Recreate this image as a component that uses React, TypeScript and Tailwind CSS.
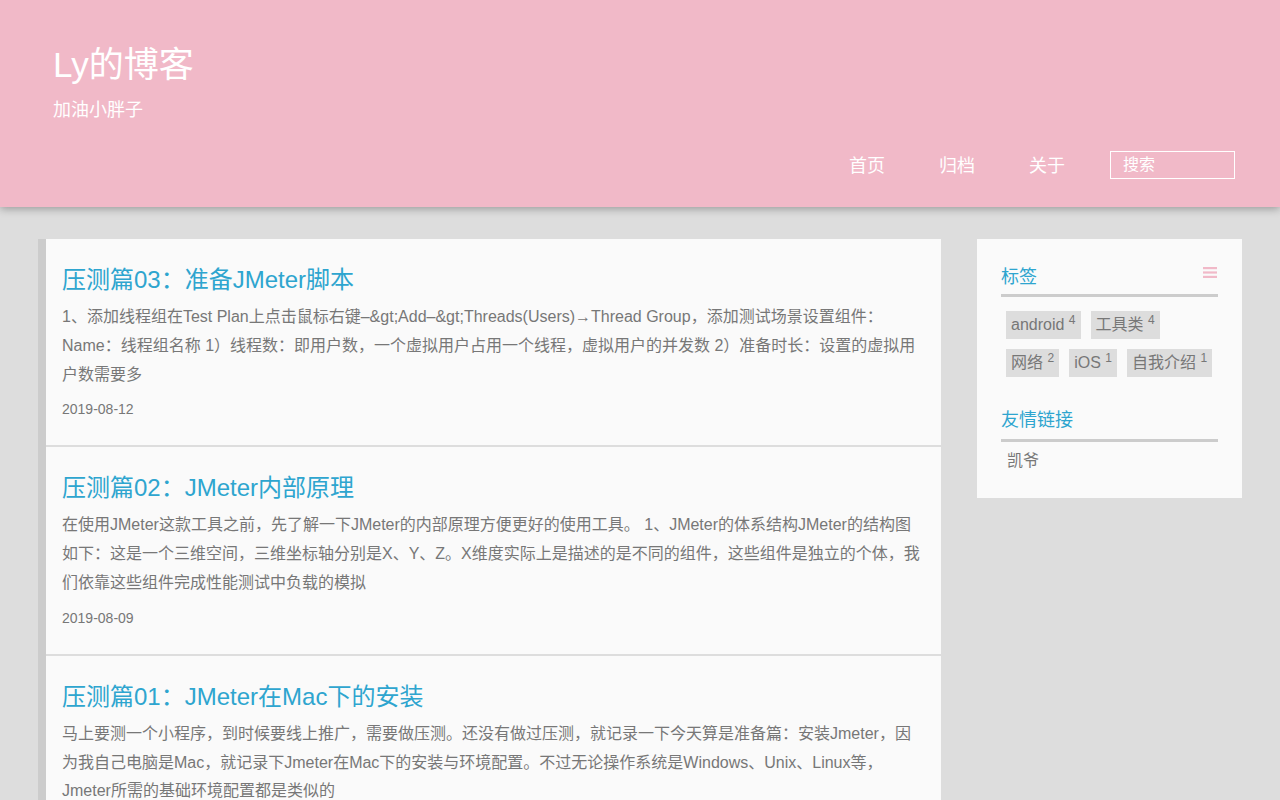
import React from "react";

const FONT = '"Liberation Sans", "Noto Sans CJK SC", sans-serif';

const posts = [
  {
    title: "压测篇03：准备JMeter脚本",
    excerpt:
      "1、添加线程组在Test Plan上点击鼠标右键–&gt;Add–&gt;Threads(Users)→Thread Group，添加测试场景设置组件：Name：线程组名称 1）线程数：即用户数，一个虚拟用户占用一个线程，虚拟用户的并发数 2）准备时长：设置的虚拟用户数需要多",
    date: "2019-08-12",
  },
  {
    title: "压测篇02：JMeter内部原理",
    excerpt:
      "在使用JMeter这款工具之前，先了解一下JMeter的内部原理方便更好的使用工具。 1、JMeter的体系结构JMeter的结构图如下：这是一个三维空间，三维坐标轴分别是X、Y、Z。X维度实际上是描述的是不同的组件，这些组件是独立的个体，我们依靠这些组件完成性能测试中负载的模拟",
    date: "2019-08-09",
  },
  {
    title: "压测篇01：JMeter在Mac下的安装",
    excerpt:
      "马上要测一个小程序，到时候要线上推广，需要做压测。还没有做过压测，就记录一下今天算是准备篇：安装Jmeter，因为我自己电脑是Mac，就记录下Jmeter在Mac下的安装与环境配置。不过无论操作系统是Windows、Unix、Linux等，Jmeter所需的基础环境配置都是类似的",
    date: "2019-08-08",
  },
];

const tags = [
  { name: "android", count: 4 },
  { name: "工具类", count: 4 },
  { name: "网络", count: 2 },
  { name: "iOS", count: 1 },
  { name: "自我介绍", count: 1 },
];

function MenuIcon() {
  return (
    <svg width="14" height="11" viewBox="0 0 14 11" className="block">
      <rect x="0" y="0" width="14" height="2.2" fill="#f1b9c8" />
      <rect x="0" y="4.4" width="14" height="2.2" fill="#f1b9c8" />
      <rect x="0" y="8.8" width="14" height="2.2" fill="#f1b9c8" />
    </svg>
  );
}

export default function App() {
  return (
    <div className="min-h-screen bg-[#dddddd]" style={{ fontFamily: FONT }}>
      <header className="relative z-10 h-[207px] bg-[#f1b9c8] pl-[53px] pr-[45px] pt-[44px] text-white shadow-[0_2px_8px_rgba(0,0,0,0.3)]">
        <div className="text-[35px] leading-[42px]">Ly的博客</div>
        <div className="mt-[11px] text-[18px] leading-[27px]">加油小胖子</div>
        <nav className="mt-[27px] flex h-[28px] items-center justify-end">
          <a className="px-[27px] pt-[2px] text-[18px] leading-[28px]">首页</a>
          <a className="px-[27px] pt-[2px] text-[18px] leading-[28px]">归档</a>
          <a className="px-[27px] pt-[2px] text-[18px] leading-[28px]">关于</a>
          <input
            placeholder="搜索"
            className="ml-[18px] h-[28px] w-[125px] border border-white bg-transparent pl-[12px] text-[16px] text-white outline-none placeholder:text-white"
            style={{ fontFamily: FONT }}
          />
        </nav>
      </header>

      <div className="flex items-start gap-[36px] px-[38px] pt-[32px]">
        <main className="min-w-0 flex-1 border-l-8 border-[#cccccc]">
          {posts.map((p) => (
            <article
              key={p.title}
              className="border-b-2 border-[#dddddd] bg-[#fafafa] pb-[26px] pl-4 pr-4 pt-[23px]"
            >
              <h2 className="text-[24px] leading-[36px] text-[#2ea5cf]">{p.title}</h2>
              <p className="mt-[5px] text-[16px] leading-[1.8] text-[#777777]">{p.excerpt}</p>
              <div className="mt-[10px] text-[14px] leading-[20px] text-[#777777]">{p.date}</div>
            </article>
          ))}
        </main>

        <aside className="w-[265px] shrink-0 bg-[#fafafa] px-6 pb-[25px] pt-[25px]">
          <div className="flex items-center justify-between border-b-[3px] border-[#cccccc] pb-[3px]">
            <span className="text-[18px] leading-[27px] text-[#2ea5cf]">标签</span>
            <span className="-mt-[10px] mr-[1px]">
              <MenuIcon />
            </span>
          </div>
          <div className="flex flex-wrap pt-[9px]">
            {tags.map((t) => (
              <span
                key={t.name}
                className="m-[5px] h-[28px] bg-[#dddddd] px-[5px] text-[16px] leading-[28px] text-[#777777]"
              >
                {t.name} <sup>{t.count}</sup>
              </span>
            ))}
          </div>
          <div className="mt-[25px] border-b-[3px] border-[#cccccc] pb-[5px]">
            <span className="text-[18px] leading-[27px] text-[#2ea5cf]">友情链接</span>
          </div>
          <div className="pl-[6px] pt-[7px] text-[16px] leading-[24px] text-[#777777]">凯爷</div>
        </aside>
      </div>
    </div>
  );
}
